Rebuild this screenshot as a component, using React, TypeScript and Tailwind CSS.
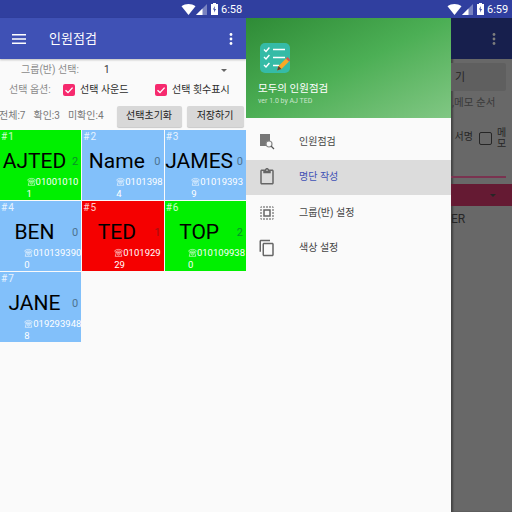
import React from 'react';

const font = { fontFamily: '"Roboto", "Noto Sans CJK KR", sans-serif' };

interface Person {
  no: number;
  name: string;
  count: number;
  phone: string;
  rest: string;
  bg: string;
  countColor: string;
  phoneInset: string;
}

const people: Person[] = [
  { no: 1, name: 'AJTED', count: 2, phone: '01001010', rest: '1', bg: 'bg-[#00f000]', countColor: 'text-[#0a8f2a]', phoneInset: 'pr-[3px]' },
  { no: 2, name: 'Name', count: 0, phone: '0101398', rest: '4', bg: 'bg-[#82c0fa]', countColor: 'text-[#4d7391]', phoneInset: 'pr-[1px]' },
  { no: 3, name: 'JAMES', count: 0, phone: '01019393', rest: '9', bg: 'bg-[#82c0fa]', countColor: 'text-[#4d7391]', phoneInset: 'pr-[3px]' },
  { no: 4, name: 'BEN', count: 0, phone: '010139390', rest: '0', bg: 'bg-[#82c0fa]', countColor: 'text-[#4d7391]', phoneInset: 'pr-0' },
  { no: 5, name: 'TED', count: 1, phone: '0101929', rest: '29', bg: 'bg-[#f50000]', countColor: 'text-[#a01010]', phoneInset: 'pr-[3px]' },
  { no: 6, name: 'TOP', count: 2, phone: '010109938', rest: '0', bg: 'bg-[#00f000]', countColor: 'text-[#0a8f2a]', phoneInset: 'pr-[1px]' },
  { no: 7, name: 'JANE', count: 0, phone: '019293948', rest: '8', bg: 'bg-[#82c0fa]', countColor: 'text-[#4d7391]', phoneInset: 'pr-0' },
];

const StatusBar = ({ time }: { time: string }) => (
  <div className="h-[18px] bg-[#303f9f] flex items-center justify-end pr-[6px] shrink-0">
    <svg width="15" height="11" viewBox="0 0 14 11">
      <path d="M0 2.2C4-.7 10-.7 14 2.2L7 11z" fill="#fff" />
    </svg>
    <svg width="11" height="11" viewBox="0 0 11 11">
      <path d="M11 0v11H0z" fill="#fff" fillOpacity="0.35" />
      <path d="M6.5 4.5V11H0z" fill="#fff" />
    </svg>
    <svg width="7" height="12" viewBox="0 0 7 12" className="ml-[4px]">
      <path d="M2 0h3v1h2v11H0V1h2z" fill="#fff" />
      <path d="M3.8 3 2 6.6h1.3L3 9.5l2-3.6H3.6z" fill="#303f9f" />
    </svg>
    <span className="text-[11px] leading-none text-white ml-[3px] w-[19px]">{time}</span>
  </div>
);

const Check = ({ label }: { label: string }) => (
  <div className="flex items-center gap-[5px]">
    <span className="w-[12px] h-[12px] rounded-[2px] bg-[#f62a6e] flex items-center justify-center">
      <svg width="10" height="10" viewBox="0 0 10 10" fill="none" stroke="#fff" strokeWidth="1.4">
        <path d="M1.5 5.2 4 7.6l4.6-5" />
      </svg>
    </span>
    <span className="text-[10px] leading-none text-[#2b2b2b]">{label}</span>
  </div>
);

const PhoneGlyph = () => (
  <svg width="9" height="9" viewBox="0 0 9 9" fill="none" stroke="#fff" strokeOpacity="0.65" strokeWidth="0.9" className="inline-block align-[-1px]">
    <path d="M.5 3.2C2 .8 7 .8 8.5 3.2L7 4.4 6 3H3L2 4.4z" />
    <path d="M2.4 4.4 1.2 8.3h6.6L6.6 4.4z" />
    <circle cx="4.5" cy="6" r="1" />
  </svg>
);

const Cell = ({ person }: { person: Person }) => (
  <div className={`${person.bg} h-[70px] flex flex-col overflow-hidden`}>
    <div className="h-[17px] pl-[1px] pt-[2px] text-[10px] leading-none text-white/80 tracking-[1px]">#{person.no}</div>
    <div className="flex items-center h-[29px]">
      <div className="w-[69px] text-center text-[21px] leading-none text-black whitespace-nowrap">{person.name}</div>
      <div className={`${person.countColor} text-[11px] leading-none pl-[3px]`}>{person.count}</div>
    </div>
    <div className={`flex justify-end ${person.phoneInset}`}>
      <div className="text-[9.5px] leading-[12px] text-white whitespace-nowrap">
        <PhoneGlyph />
        {person.phone}
        <br />
        {person.rest}
      </div>
    </div>
  </div>
);

const MenuItem = ({ label, active, children }: { label: string; active?: boolean; children: React.ReactNode }) => (
  <div className={`h-[35.5px] flex items-center ${active ? 'bg-[#dcdcdc]' : ''}`}>
    <div className="w-[42px] mr-[11px] flex justify-center">{children}</div>
    <span className={`text-[10px] leading-none ${active ? 'text-[#3f51b5]' : 'text-[#444]'}`}>{label}</span>
  </div>
);

export default function App() {
  return (
    <div className="w-[512px] h-[512px] flex overflow-hidden bg-[#fafafa]" style={font}>
      {/* left phone: attendance screen */}
      <div className="w-[246px] shrink-0 flex flex-col">
        <StatusBar time="6:58" />
        <div className="h-[41px] bg-[#3f51b5] flex items-center shrink-0 shadow-[0_1px_2px_rgba(0,0,0,0.25)]">
          <svg width="14" height="10" viewBox="0 0 14 10" className="ml-[12px]" fill="#fff">
            <path d="M0 0h14v1.4H0zM0 4.3h14v1.4H0zM0 8.6h14V10H0z" />
          </svg>
          <span className="ml-[23px] text-[13px] leading-none text-white">인원점검</span>
          <svg width="4" height="12" viewBox="0 0 4 12" className="ml-auto mr-[13px]" fill="#fff">
            <circle cx="2" cy="1.5" r="1.4" />
            <circle cx="2" cy="6" r="1.4" />
            <circle cx="2" cy="10.5" r="1.4" />
          </svg>
        </div>

        <div className="h-[20px] flex items-center mt-[1px] text-[10px] leading-none shrink-0">
          <span className="ml-[21px] w-[83px] text-[#8a8a8a]">그룹(반) 선택:</span>
          <span className="text-[#333]">1</span>
          <span className="ml-auto mr-[19px] w-0 h-0 border-x-[3px] border-x-transparent border-t-[3px] border-t-[#666]" />
        </div>

        <div className="h-[20px] flex items-center text-[10px] leading-none shrink-0">
          <span className="ml-[9px] w-[54px] text-[#8a8a8a]">선택 옵션:</span>
          <div className="w-[92px]"><Check label="선택 사운드" /></div>
          <Check label="선택 횟수표시" />
        </div>

        <div className="h-[22px] mt-[5px] flex items-center text-[10px] leading-none shrink-0">
          <span className="text-[#777] whitespace-nowrap -ml-[1px] flex gap-[8px]">
            <span>전체:7</span>
            <span>확인:3</span>
            <span>미확인:4</span>
          </span>
          <button className="ml-[13px] w-[65px] h-[21px] rounded-[2px] bg-[#d8d8d8] text-[10px] text-[#222] shadow-[0_1px_1px_rgba(0,0,0,0.2)]">선택초기화</button>
          <button className="ml-[5px] w-[57px] h-[21px] rounded-[2px] bg-[#d8d8d8] text-[10px] text-[#222] shadow-[0_1px_1px_rgba(0,0,0,0.2)]">저장하기</button>
        </div>

        <div className="grid grid-cols-3 gap-[1px] mt-[3px] bg-[#fafafa]">
          {people.map((p) => (
            <Cell key={p.no} person={p} />
          ))}
        </div>
      </div>

      {/* right phone: open drawer over the list editor */}
      <div className="flex-1 flex flex-col min-w-0">
        <StatusBar time="6:59" />
        <div className="flex flex-1 min-h-0">
          <div className="w-[205px] shrink-0 bg-[#fafafa] flex flex-col">
            <div className="h-[100px] bg-gradient-to-br from-[#2e8b36] via-[#4caf55] to-[#81c784] flex flex-col pl-[14px] pt-[25px]">
              <svg width="30" height="31" viewBox="0 0 30 31">
                <rect width="30" height="30" rx="5" fill="#35bba6" />
                <g fill="none" stroke="#fff" strokeWidth="1.4">
                  <path d="M4 6.5 6 8.5l3.4-4M4 14l2 2 3.4-4M4 22l2 2 3.4-4" />
                  <path d="M13 6.5h12M13 14.5h12M13 22.5h6" />
                </g>
                <path d="M17 27.5l1.5-4.5L26 15.5l3 3-7.5 7.5z" fill="#f9a825" />
                <path d="M26 15.5l1.5-1.5 3 3-1.5 1.5z" fill="#d9534f" />
                <path d="M17 27.5l1.5-4.5 3 3z" fill="#5d4037" />
              </svg>
              <span className="-ml-[2px] mt-[10px] text-[10.5px] leading-none text-white">모두의 인원점검</span>
              <span className="-ml-[2px] mt-[3px] text-[7px] leading-none text-white/70">ver 1.0 by AJ TED</span>
            </div>
            <div className="h-[6px]" />
            <MenuItem label="인원점검">
              <svg width="16" height="17" viewBox="0 0 16 17">
                <rect x="1" y="1" width="10" height="12" fill="#777" />
                <circle cx="10" cy="11" r="3" fill="#fafafa" stroke="#888" strokeWidth="1.2" />
                <path d="M12 13l3 3" stroke="#555" strokeWidth="1.3" />
              </svg>
            </MenuItem>
            <MenuItem label="명단 작성" active>
              <svg width="18" height="18" viewBox="0 0 24 24" fill="#666">
                <path d="M19 2h-4.18C14.4.84 13.3 0 12 0c-1.3 0-2.4.84-2.82 2H5c-1.1 0-2 .9-2 2v16c0 1.1.9 2 2 2h14c1.1 0 2-.9 2-2V4c0-1.1-.9-2-2-2zm-7 0c.55 0 1 .45 1 1s-.45 1-1 1-1-.45-1-1 .45-1 1-1zm7 18H5V4h2v3h10V4h2v16z" />
              </svg>
            </MenuItem>
            <MenuItem label="그룹(반) 설정">
              <svg width="18" height="18" viewBox="0 0 24 24" fill="#666">
                <path d="M3 5h2V3c-1.1 0-2 .9-2 2zm0 8h2v-2H3v2zm4 8h2v-2H7v2zM3 9h2V7H3v2zm10-6h-2v2h2V3zm6 0v2h2c0-1.1-.9-2-2-2zM5 21v-2H3c0 1.1.9 2 2 2zm-2-4h2v-2H3v2zM9 3H7v2h2V3zm2 18h2v-2h-2v2zm8-8h2v-2h-2v2zm0 8c1.1 0 2-.9 2-2h-2v2zm0-12h2V7h-2v2zm0 8h2v-2h-2v2zm-4 4h2v-2h-2v2zm0-16h2V3h-2v2zM7 17h10V7H7v10zm2-8h6v6H9V9z" />
              </svg>
            </MenuItem>
            <MenuItem label="색상 설정">
              <svg width="18" height="18" viewBox="0 0 24 24" fill="#666">
                <path d="M16 1H4c-1.1 0-2 .9-2 2v14h2V3h12V1zm3 4H8c-1.1 0-2 .9-2 2v14c0 1.1.9 2 2 2h11c1.1 0 2-.9 2-2V7c0-1.1-.9-2-2-2zm0 16H8V7h11v14z" />
              </svg>
            </MenuItem>
          </div>

          {/* dimmed page behind the drawer */}
          <div className="flex-1 min-w-0 bg-[#686868] flex flex-col overflow-hidden shadow-[inset_2px_0_2px_rgba(0,0,0,0.35)] text-[10px] leading-none text-[#262626]">
            <div className="h-[41px] bg-[#171f4d] flex items-center justify-end pr-[16px] shrink-0">
              <svg width="4" height="12" viewBox="0 0 4 12" fill="#7d7d7d">
                <circle cx="2" cy="1.5" r="1.4" />
                <circle cx="2" cy="6" r="1.4" />
                <circle cx="2" cy="10.5" r="1.4" />
              </svg>
            </div>
            <div className="h-[28px] mt-[4px] mr-[6px] bg-[#5f5f5f] flex items-center rounded-r-[2px] shrink-0">
              <span className="ml-[4px] text-[11px]">기</span>
            </div>
            <div className="mt-[7px] h-[10px] whitespace-nowrap pl-[1px] text-[10.5px] text-[#3a3a3a] shrink-0">,메모 순서</div>
            <div className="mt-[23px] h-[30px] flex items-start shrink-0">
              <span className="w-[22px] whitespace-nowrap flex justify-end mt-[1px]">서명</span>
              <span className="ml-[6px] mt-[1px] w-[13px] h-[13px] rounded-[2px] border-[1.5px] border-[#262626]" />
              <span className="ml-[5px] -mt-[4px] w-[9px] break-all text-[10px] leading-[11px]">메모</span>
            </div>
            <div className="mt-[15px] h-[2px] mr-[6px] bg-[#7a3350] shrink-0" />
            <div className="mt-[6px] h-[22px] bg-[#651a33] flex items-center justify-end pr-[16px] shrink-0">
              <span className="w-0 h-0 border-x-[3.5px] border-x-transparent border-t-[3.5px] border-t-[#262626]" />
            </div>
            <div className="mt-[7px] text-[12px]">ER</div>
          </div>
        </div>
      </div>
    </div>
  );
}
